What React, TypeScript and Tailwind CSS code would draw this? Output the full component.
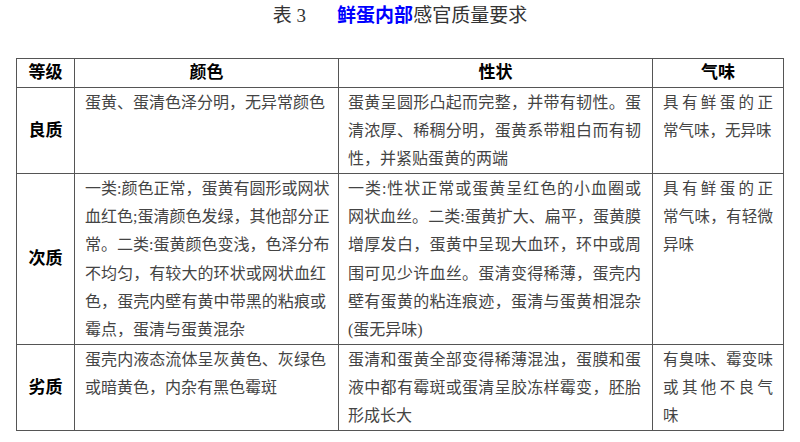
import React from "react";

const font = { fontFamily: '"Liberation Serif", "Noto Sans CJK SC", serif' };

function Lines({ lines }: { lines: string[] }) {
  return (
    <>
      {lines.map((l, i) => (
        <div
          key={i}
          className={
            i < lines.length - 1
              ? "whitespace-nowrap text-justify [text-align-last:justify]"
              : "whitespace-nowrap text-left"
          }
        >
          {l}
        </div>
      ))}
    </>
  );
}

export default function App() {
  const rows = [
    {
      label: "良质",
      color: ["蛋黄、蛋清色泽分明，无异常颜色"],
      shape: [
        "蛋黄呈圆形凸起而完整，并带有韧性。蛋",
        "清浓厚、稀稠分明，蛋黄系带粗白而有韧",
        "性，并紧贴蛋黄的两端",
      ],
      smell: ["具有鲜蛋的正", "常气味，无异味"],
    },
    {
      label: "次质",
      color: [
        "一类:颜色正常，蛋黄有圆形或网状",
        "血红色;蛋清颜色发绿，其他部分正",
        "常。二类:蛋黄颜色变浅，色泽分布",
        "不均匀，有较大的环状或网状血红",
        "色，蛋壳内壁有黄中带黑的粘痕或",
        "霉点，蛋清与蛋黄混杂",
      ],
      shape: [
        "一类:性状正常或蛋黄呈红色的小血圈或",
        "网状血丝。二类:蛋黄扩大、扁平，蛋黄膜",
        "增厚发白，蛋黄中呈现大血环，环中或周",
        "围可见少许血丝。蛋清变得稀薄，蛋壳内",
        "壁有蛋黄的粘连痕迹，蛋清与蛋黄相混杂",
        "(蛋无异味)",
      ],
      smell: ["具有鲜蛋的正", "常气味，有轻微", "异味"],
    },
    {
      label: "劣质",
      color: ["蛋壳内液态流体呈灰黄色、灰绿色", "或暗黄色，内杂有黑色霉斑"],
      shape: [
        "蛋清和蛋黄全部变得稀薄混浊，蛋膜和蛋",
        "液中都有霉斑或蛋清呈胶冻样霉变，胚胎",
        "形成长大",
      ],
      smell: ["有臭味、霉变味", "或其他不良气", "味"],
    },
  ];

  return (
    <div className="w-[800px] h-[442px] bg-white overflow-hidden" style={font}>
      <div className="flex justify-center items-center h-[31px] pt-[1px] text-[19px] leading-[24px]">
        <span className="text-[#333]">表 3</span>
        <span className="ml-[31px] font-bold text-[#0000ff]">鲜蛋内部</span>
        <span className="text-[#333]">感官质量要求</span>
      </div>
      <div className="pt-[27px] pl-[16px]">
        <table className="border-collapse w-[767px] table-fixed border-[1.5px] border-[#444]">
          <colgroup>
            <col className="w-[58px]" />
            <col className="w-[264px]" />
            <col className="w-[314px]" />
            <col className="w-[131px]" />
          </colgroup>
          <thead>
            <tr className="h-[29px]">
              {["等级", "颜色", "性状", "气味"].map((h) => (
                <th
                  key={h}
                  className="border border-[#555] text-center font-bold text-[17px] leading-[26px] text-black p-0"
                >
                  {h}
                </th>
              ))}
            </tr>
          </thead>
          <tbody>
            {rows.map((r) => (
              <tr key={r.label}>
                <td className="border border-[#555] text-center align-middle font-bold text-[17px] text-black p-0">
                  {r.label}
                </td>
                <td className="border border-[#555] align-top pl-[10px] pr-[12px] pt-[1px] pb-0 text-[16px] leading-[28.1px] text-[#444]">
                  <Lines lines={r.color} />
                </td>
                <td className="border border-[#555] align-top pl-[9px] pr-[11px] pt-[1px] pb-0 text-[16px] leading-[28.1px] text-[#444]">
                  <Lines lines={r.shape} />
                </td>
                <td className="border border-[#555] align-top pl-[10px] pr-[10px] pt-[1px] pb-0 text-[15.5px] leading-[28.1px] text-[#444]">
                  <Lines lines={r.smell} />
                </td>
              </tr>
            ))}
          </tbody>
        </table>
      </div>
    </div>
  );
}
